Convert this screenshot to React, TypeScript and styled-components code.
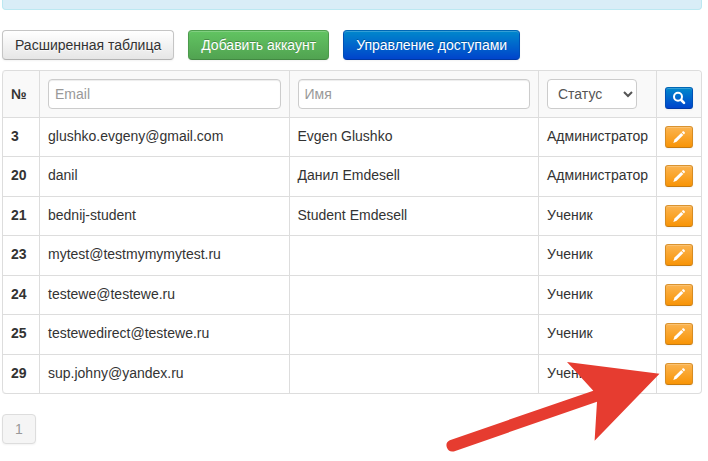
import React from "react";
import styled, { createGlobalStyle, css } from "styled-components";

const GlobalStyle = createGlobalStyle`
  * { box-sizing: border-box; }
  body {
    margin: 0;
    background: #fff;
    color: #333;
    font: 14px/20px "Liberation Sans", Arial, sans-serif;
  }
  button, input, select { font: inherit; }
`;

const Page = styled.main`
  padding: 0 6px 8px 2px;
`;

const Notice = styled.div`
  height: 10px;
  background: #d9edf7;
  border: 1px solid #bce8f1;
  border-top: 0;
  border-radius: 0 0 4px 4px;
`;

const Toolbar = styled.div`
  display: flex;
  gap: 14px;
  margin: 20px 0 10px;
`;

type Tone = "plain" | "success" | "primary" | "warning";

const tones = {
  plain: css`
    color: #333;
    background: linear-gradient(#fff, #e6e6e6);
    border-color: #c5c5c5 #c5c5c5 #b3b3b3;
    text-shadow: 0 1px 1px rgba(255, 255, 255, 0.75);
  `,
  success: css`
    color: #fff;
    background: linear-gradient(#62c462, #51a351);
    border-color: #4fa04f #4c9a4c #428842;
  `,
  primary: css`
    color: #fff;
    background: linear-gradient(#0088cc, #0044cc);
    border-color: #0067b5 #0050b5 #0038a4;
  `,
  warning: css`
    color: #fff;
    background: linear-gradient(#fbb450, #f89406);
    border-color: #d99330 #d68c24 #c67a10;
  `,
};

const Button = styled.button<{ $tone: Tone }>`
  padding: 4px 12px;
  border: 1px solid;
  border-radius: 4px;
  white-space: nowrap;
  cursor: pointer;
  text-shadow: 0 -1px 0 rgba(0, 0, 0, 0.25);
  box-shadow: inset 0 1px 0 rgba(255, 255, 255, 0.2), 0 1px 2px rgba(0, 0, 0, 0.05);
  ${(p) => tones[p.$tone]}
`;

const IconButton = styled(Button)`
  display: flex;
  align-items: center;
  justify-content: center;
  width: 28px;
  height: 22px;
  padding: 0;
  border-radius: 3px;
`;

const TableArea = styled.div`
  position: relative;
`;

const Table = styled.table`
  width: 100%;
  table-layout: fixed;
  border-collapse: separate;
  border-spacing: 0;
  border: 1px solid #ddd;
  border-left: 0;
  border-radius: 4px;
`;

const Col = styled.col<{ $width?: number }>`
  width: ${(p) => (p.$width ? `${p.$width}px` : "auto")};
`;

const cell = css`
  padding: 8px;
  text-align: left;
  border-left: 1px solid #ddd;
`;

const HeadCell = styled.th<{ $align?: string }>`
  ${cell}
  background: #f9f9f9;
  vertical-align: ${(p) => p.$align ?? "middle"};
  &:first-child { border-top-left-radius: 4px; }
  &:last-child { border-top-right-radius: 4px; }
`;

const Row = styled.tr`
  height: 39px;
  &:nth-child(even) { height: 40px; }
  &:last-child > :first-child { border-bottom-left-radius: 4px; }
`;

const Cell = styled.td`
  ${cell}
  border-top: 1px solid #ddd;
  vertical-align: top;
  white-space: nowrap;
`;

const NumberCell = styled(Cell).attrs({ as: "th", scope: "row" })`
  font-weight: bold;
`;

const field = css`
  display: block;
  height: 30px;
  color: #555;
  font-weight: normal;
  background: #fff;
  border: 1px solid #ccc;
  border-radius: 4px;
`;

const Input = styled.input`
  ${field}
  width: 100%;
  padding: 4px 6px;
  box-shadow: inset 0 1px 1px rgba(0, 0, 0, 0.075);
  &::placeholder { color: #999; }
`;

const Select = styled.select`
  ${field}
  width: 90px;
  padding: 4px 6px;
`;

const Pager = styled.nav`
  display: flex;
  margin-top: 20px;
`;

const PageLink = styled.a`
  padding: 4px 12px;
  color: #999;
  background: #f5f5f5;
  border: 1px solid #ddd;
  border-radius: 4px;
  box-shadow: 0 1px 2px rgba(0, 0, 0, 0.05);
  text-decoration: none;
`;

const Arrow = styled.svg`
  position: absolute;
  right: 42px;
  bottom: -58px;
  pointer-events: none;
`;

const SearchIcon = () => (
  <svg width="14" height="14" viewBox="0 0 14 14" fill="none" stroke="#fff" aria-hidden="true">
    <circle cx="6" cy="5.8" r="4" strokeWidth="2" />
    <path d="M9.2 9 12 11.8" strokeWidth="2.6" strokeLinecap="round" />
  </svg>
);

const PencilIcon = () => (
  <svg width="14" height="14" viewBox="0 0 14 14" fill="#fff" aria-hidden="true">
    <path d="M10.6 1.5c.4-.4 1-.4 1.4 0l.7.7c.4.4.4 1 0 1.4l-.8.8-2.1-2.1z" />
    <path d="M9.2 2.9 11.3 5 4.6 11.7 1.3 12.9 2.5 9.6z" />
  </svg>
);

const accounts = [
  { id: 3, email: "glushko.evgeny@gmail.com", name: "Evgen Glushko", status: "Администратор" },
  { id: 20, email: "danil", name: "Данил Emdesell", status: "Администратор" },
  { id: 21, email: "bednij-student", name: "Student Emdesell", status: "Ученик" },
  { id: 23, email: "mytest@testmymymytest.ru", name: "", status: "Ученик" },
  { id: 24, email: "testewe@testewe.ru", name: "", status: "Ученик" },
  { id: 25, email: "testewedirect@testewe.ru", name: "", status: "Ученик" },
  { id: 29, email: "sup.johny@yandex.ru", name: "", status: "Ученик" },
];

export default function App() {
  return (
    <>
      <GlobalStyle />
      <Page>
        <Notice />
        <Toolbar>
          <Button $tone="plain">Расширенная таблица</Button>
          <Button $tone="success">Добавить аккаунт</Button>
          <Button $tone="primary">Управление доступами</Button>
        </Toolbar>
        <TableArea>
          <Table>
            <colgroup>
              <Col $width={37} />
              <Col />
              <Col />
              <Col $width={118} />
              <Col $width={45} />
            </colgroup>
            <thead>
              <tr>
                <HeadCell scope="col">№</HeadCell>
                <HeadCell scope="col"><Input type="text" placeholder="Email" aria-label="Email" /></HeadCell>
                <HeadCell scope="col"><Input type="text" placeholder="Имя" aria-label="Имя" /></HeadCell>
                <HeadCell scope="col">
                  <Select aria-label="Статус" defaultValue="">
                    <option value="">Статус</option>
                    <option>Администратор</option>
                    <option>Ученик</option>
                  </Select>
                </HeadCell>
                <HeadCell scope="col" $align="bottom">
                  <IconButton $tone="primary" aria-label="Найти"><SearchIcon /></IconButton>
                </HeadCell>
              </tr>
            </thead>
            <tbody>
              {accounts.map((a) => (
                <Row key={a.id}>
                  <NumberCell>{a.id}</NumberCell>
                  <Cell>{a.email}</Cell>
                  <Cell>{a.name}</Cell>
                  <Cell>{a.status}</Cell>
                  <Cell>
                    <IconButton $tone="warning" aria-label={`Изменить ${a.email}`}><PencilIcon /></IconButton>
                  </Cell>
                </Row>
              ))}
            </tbody>
          </Table>
          <Arrow width="214" height="91" viewBox="0 0 214 91" fill="#e63c30" aria-hidden="true">
            <path d="M121 1 213.5 12.7 148.6 79.7 151 40.7 7.8 90.4A6 6 0 0 1 3.8 79.2L147.3 29.7Z" />
          </Arrow>
        </TableArea>
        <Pager aria-label="Страницы">
          <PageLink href="#1" aria-current="page">1</PageLink>
        </Pager>
      </Page>
    </>
  );
}
